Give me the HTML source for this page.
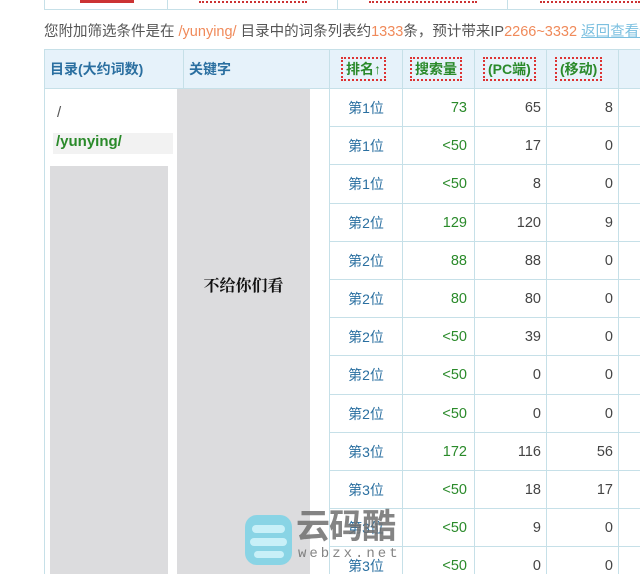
<!DOCTYPE html>
<html><head><meta charset="utf-8"><style>
*{margin:0;padding:0;box-sizing:border-box}
body{width:640px;height:574px;overflow:hidden;background:#fff;position:relative;font-family:"Liberation Sans","Noto Sans CJK SC",sans-serif;font-size:14px;color:#333}
.a{position:absolute}
.vl{position:absolute;width:1px;background:#c6e0e8}
.hl{position:absolute;height:1px;background:#c6e0e8}
.c{position:absolute;text-align:center;width:72px;line-height:38px;height:38px}
.r{position:absolute;text-align:right;line-height:38px;height:38px}
.hd{position:absolute;color:#2a8a2a;font-weight:bold;border:2px dotted #d33;padding:0 3px;line-height:20px;font-size:14px}
</style></head><body>
<div class="hl" style="left:44px;top:9px;width:596px"></div>
<div class="vl" style="left:44px;top:0;height:10px"></div>
<div class="vl" style="left:167px;top:0;height:10px"></div>
<div class="vl" style="left:337px;top:0;height:10px"></div>
<div class="vl" style="left:507px;top:0;height:10px"></div>
<div class="a" style="left:80px;top:0;width:54px;height:3px;background:#c33"></div>
<div class="a" style="left:199px;top:0;width:108px;height:3px;border-bottom:2px dotted #c33"></div>
<div class="a" style="left:369px;top:0;width:108px;height:3px;border-bottom:2px dotted #c33"></div>
<div class="a" style="left:540px;top:0;width:100px;height:3px;border-bottom:2px dotted #c33"></div>
<div class="a" style="left:44px;top:20px;white-space:nowrap;font-size:14.5px;color:#555">您附加筛选条件是在 <span style="color:#f08a5a">/yunying/</span> 目录中的词条列表约<span style="color:#f08a5a">1333</span>条，预计带来IP<span style="color:#f08a5a">2266~3332</span> <span style="color:#7cc0e0;text-decoration:underline">返回查看全部</span></div>
<div class="a" style="left:44px;top:49px;width:596px;height:39px;background:#e6f2fa"></div>
<div class="hl" style="left:44px;top:49px;width:596px"></div>
<div class="hl" style="left:44px;top:88px;width:596px"></div>
<div class="a" style="left:50px;top:59px;color:#2a6fa0;font-weight:bold">目录(大约词数)</div>
<div class="a" style="left:189px;top:59px;color:#2a6fa0;font-weight:bold">关键字</div>
<div class="hd" style="left:341px;top:57px">排名↑</div>
<div class="hd" style="left:410px;top:57px">搜索量</div>
<div class="hd" style="left:483px;top:57px">(PC端)</div>
<div class="hd" style="left:555px;top:57px">(移动)</div>
<div class="vl" style="left:44px;top:49px;height:525px"></div>
<div class="vl" style="left:183px;top:49px;height:40px"></div>
<div class="vl" style="left:329px;top:49px;height:525px"></div>
<div class="vl" style="left:402px;top:49px;height:525px"></div>
<div class="vl" style="left:474px;top:49px;height:525px"></div>
<div class="vl" style="left:546px;top:49px;height:525px"></div>
<div class="vl" style="left:618px;top:49px;height:525px"></div>
<div class="a" style="left:57px;top:104px;color:#555;font-size:15px">/</div>
<div class="a" style="left:53px;top:133px;width:120px;height:21px;background:#f2f2f2"></div>
<div class="a" style="left:56px;top:133px;color:#2a8a2a;font-weight:bold;font-size:15px">/yunying/</div>
<div class="a" style="left:50px;top:166px;width:118px;height:408px;background:#dcdcde"></div>
<div class="a" style="left:177px;top:89px;width:133px;height:485px;background:#dcdcde"></div>
<div class="a" style="left:177px;top:273px;width:133px;text-align:center;font-family:'Noto Serif CJK SC',serif;font-weight:bold;font-size:16px;color:#111">不给你们看</div>
<div id="rows"></div>
<script>
var d=[["第1位","73","65","8"],["第1位","<50","17","0"],["第1位","<50","8","0"],["第2位","129","120","9"],["第2位","88","88","0"],["第2位","80","80","0"],["第2位","<50","39","0"],["第2位","<50","0","0"],["第2位","<50","0","0"],["第3位","172","116","56"],["第3位","<50","18","17"],["第3位","<50","9","0"],["第3位","<50","0","0"]];
var h="";
for(var i=0;i<d.length;i++){var t=88+i*38.2;var y=Math.round(t+1);
if(i>0)h+='<div class="hl" style="left:329px;top:'+Math.round(t)+'px;width:311px"></div>';
h+='<div class="c" style="left:330px;top:'+y+'px;color:#2a6fa0;font-size:14px">'+d[i][0]+'</div>';
h+='<div class="r" style="left:403px;width:64px;top:'+y+'px;color:#2a8a2a;font-size:14.5px">'+d[i][1].replace("<","&lt;")+'</div>';
h+='<div class="r" style="left:475px;width:66px;top:'+y+'px;color:#444;font-size:14.5px">'+d[i][2]+'</div>';
h+='<div class="r" style="left:547px;width:66px;top:'+y+'px;color:#444;font-size:14.5px">'+d[i][3]+'</div>';}
document.getElementById("rows").innerHTML=h;
</script>
<div class="a" style="left:245px;top:515px;width:47px;height:50px;border-radius:12px;background:#7fd3e6;opacity:.9"></div>
<div class="a" style="left:252px;top:525px;width:33px;height:8px;border-radius:4px;background:#c8f0f8"></div>
<div class="a" style="left:250px;top:538px;width:37px;height:8px;border-radius:4px;background:#c8f0f8"></div>
<div class="a" style="left:254px;top:551px;width:30px;height:7px;border-radius:4px;background:#c8f0f8"></div>
<div class="a" style="left:296px;top:506px;font-size:34px;font-weight:bold;color:rgba(110,110,110,.85);letter-spacing:-1px;line-height:42px">云码酷</div>
<div class="a" style="left:298px;top:546px;font-size:14px;color:rgba(110,110,110,.85);letter-spacing:3px;font-family:'Liberation Mono',monospace">webzx.net</div>
</body></html>
